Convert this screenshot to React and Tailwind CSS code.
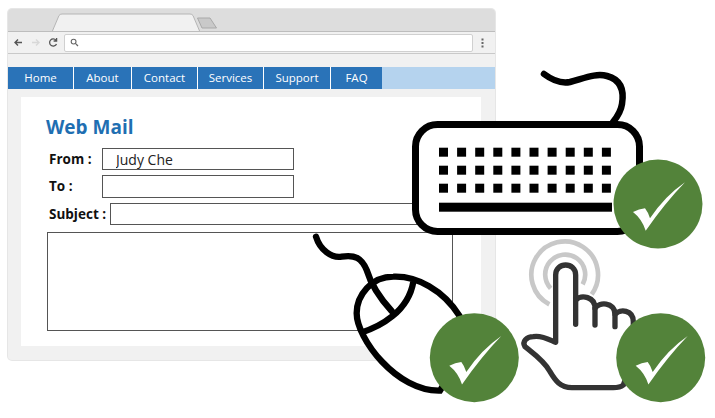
import React from "react";

const navItems = [
  { label: "Home", width: "w-[66px]" },
  { label: "About", width: "w-[58px]" },
  { label: "Contact", width: "w-[66px]" },
  { label: "Services", width: "w-[66px]" },
  { label: "Support", width: "w-[67px]" },
  { label: "FAQ", width: "w-[51px]" },
];

const Field = ({ label, labelWidth, inputWidth, height, value, className }) => (
  <div className={`flex items-center ${className}`}>
    <span className={`${labelWidth} shrink-0 text-[13.5px] font-bold text-[#111]`}>{label}</span>
    <input
      readOnly
      value={value || ""}
      className={`${inputWidth} ${height} border border-[#555] bg-white pl-[13px] text-[14px] text-[#222] outline-none`}
    />
  </div>
);

const BrowserChrome = () => (
  <>
    <div className="h-[23px] border-b border-[#bdbdbd] bg-[#dddddd]">
      <svg width="230" height="22" className="block">
        <path d="M44 23 L51 6.5 Q52 5 54 5 L182 5 Q184 5 185 6.5 L192 23" fill="#f1f1f1" stroke="#b5b5b5" />
        <path d="M189.5 9 L202 9 L208.5 19 L194 19 Z" fill="#c9c9c9" stroke="#a9a9a9" strokeLinejoin="round" />
      </svg>
    </div>
    <div className="flex h-[22px] items-center border-b border-[#c9c9c9] bg-[#f1f1f1]">
      <svg width="56" height="21" viewBox="0 0 56 21" className="shrink-0">
        <path d="M14 10.5 H7 M10 7.5 L7 10.5 L10 13.5" fill="none" stroke="#555" strokeWidth="1.4" />
        <path d="M24 10.5 H31 M28 7.5 L31 10.5 L28 13.5" fill="none" stroke="#d8d8d8" strokeWidth="1.4" />
        <path d="M48.5 12 A3.6 3.6 0 1 1 48 8.2 M48.6 6 V9 H45.6" fill="none" stroke="#555" strokeWidth="1.3" />
      </svg>
      <div className="flex h-[18px] w-[409px] items-center rounded-[2px] border border-[#d0d0d0] bg-white pl-[5px]">
        <svg width="9" height="9" viewBox="0 0 9 9">
          <circle cx="3.6" cy="3.6" r="2.4" fill="none" stroke="#666" strokeWidth="1.1" />
          <path d="M5.4 5.4 L8 8" stroke="#666" strokeWidth="1.3" />
        </svg>
      </div>
      <svg width="3" height="10" className="ml-[8px]">
        <rect x="0.5" y="0.5" width="2" height="2" fill="#666" />
        <rect x="0.5" y="4" width="2" height="2" fill="#666" />
        <rect x="0.5" y="7.5" width="2" height="2" fill="#666" />
      </svg>
    </div>
  </>
);

const Nav = () => (
  <div className="mt-[13px] flex h-[22px] bg-[#b5d3ee]">
    {navItems.map((item, i) => (
      <div
        key={item.label}
        className={`${item.width} ${i < navItems.length - 1 ? "border-r border-white" : ""} flex items-center justify-center bg-[#2a73b8] text-[11.5px] text-white`}
      >
        {item.label}
      </div>
    ))}
  </div>
);

const Check = ({ cx, cy }) => (
  <g transform={`translate(${cx} ${cy})`}>
    <circle r="44.5" fill="#53833a" />
    <path
      d="M-25 8 Q-19 5 -13 4.3 Q-10 8 -8 14.3 Q7 -8 27 -21.7 Q7 -1 -12.3 26.7 Q-16 15 -25 8 Z"
      fill="#fff"
    />
  </g>
);

const Keyboard = () => {
  const keys = [];
  for (let row = 0; row < 3; row++) {
    for (let col = 0; col < 10; col++) {
      keys.push(<rect key={`${row}-${col}`} x={439 + col * 18.1} y={147.7 + row * 18} width="9" height="9" fill="#000" />);
    }
  }
  return (
    <g>
      <path d="M544 74 C552 80 560 84 570 82 C585 78 596 73 607 76 C622 80 624 92 622 104 C621 111 618 116 613 122" fill="none" stroke="#000" strokeWidth="6.5" strokeLinecap="round" />
      <rect x="415.5" y="124.5" width="224" height="107" rx="22" fill="#fff" stroke="#000" strokeWidth="7" />
      {keys}
      <rect x="439" y="202.7" width="173" height="9" fill="#000" />
    </g>
  );
};

// coordinates in this group are the 3x crop ones
const Mouse = () => (
  <g transform="translate(300 225) scale(0.3333)" fill="none" stroke="#000" strokeWidth="19">
    <path d="M478 272 C430 195 350 152 280 155 C215 155 170 210 170 265 C170 340 290 500 420 497 L480 400 Z" fill="#fff" />
    <path d="M183 323 C240 305 325 260 340 170" />
    <path d="M48 35 C60 75 95 100 125 95 C165 88 185 100 200 135 C215 185 240 220 275 258" strokeLinecap="round" />
  </g>
);

const Hand = () => (
  <g transform="translate(510 225) scale(0.3333)" fill="none" strokeLinecap="round">
    <path d="M118 238 A100 100 0 1 1 245 208" stroke="#c8c8c8" strokeWidth="14" strokeLinecap="butt" />
    <path d="M122 190 A60 60 0 1 1 218 178" stroke="#c8c8c8" strokeWidth="14" strokeLinecap="butt" />
    <path
      d="M137 352 L137 150 C137 110 197 110 197 150 L197 225 C215 208 255 215 255 250 C265 230 315 230 315 268 C330 250 370 255 370 290 L370 400 L340 480 Q330 488 310 488 L190 488 C150 490 135 465 120 440 C105 410 70 385 45 365 C35 350 50 335 70 335 C95 330 120 345 137 352 Z"
      fill="#fff"
      stroke="#333"
      strokeWidth="16"
      strokeLinejoin="round"
    />
    <path d="M197 225 L197 298 M255 250 L255 300 M315 268 L315 305" stroke="#333" strokeWidth="16" />
  </g>
);

export default function App() {
  return (
    <div className="relative h-[418px] w-[715px] overflow-hidden bg-white pl-[8px] pt-[9px] font-['Open_Sans',sans-serif]">
      <div className="h-[351px] w-[487px] overflow-hidden rounded-[4px] bg-[#f1f1f1] shadow-[0_0_0_1px_#e6e6e6]">
        <BrowserChrome />
        <Nav />
        <div className="ml-[13px] mr-[14px] mt-[8px] h-[249px] bg-white pl-[25px] pt-[17px]">
          <h1 className="text-[19px] leading-[26px] font-bold text-[#1f6fb2]">Web Mail</h1>
          <div className="pl-[3px]">
            <Field className="mt-[8px]" label="From :" labelWidth="w-[53px]" inputWidth="w-[192px]" height="h-[22px]" value="Judy Che" />
            <Field className="mt-[5px]" label="To :" labelWidth="w-[53px]" inputWidth="w-[192px]" height="h-[23px]" />
            <Field className="mt-[5px]" label="Subject :" labelWidth="w-[61px]" inputWidth="w-[343px]" height="h-[22px]" />
          </div>
          <div className="ml-[1px] mt-[7px] h-[99px] w-[406px] border border-[#555] bg-white" />
        </div>
      </div>
      <svg width="715" height="418" viewBox="0 0 715 418" className="absolute left-0 top-0">
        <Keyboard />
        <Mouse />
        <Hand />
        <Check cx={658} cy={204} />
        <Check cx={474.3} cy={357.7} />
        <Check cx={660.7} cy={357.7} />
      </svg>
    </div>
  );
}
